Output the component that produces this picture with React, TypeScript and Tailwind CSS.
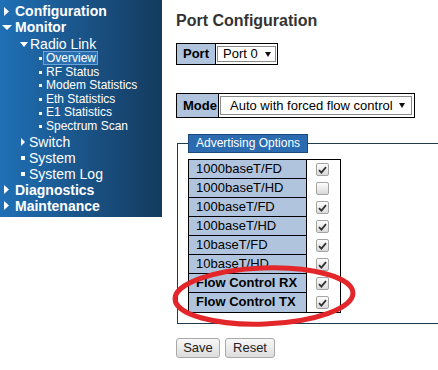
import React from 'react';

function TriRight({ w = 5, h = 9 }: { w?: number; h?: number }) {
  return (
    <svg width={w} height={h} viewBox={`0 0 ${w} ${h}`} className="shrink-0">
      <polygon points={`0,0 ${w},${h / 2} 0,${h}`} fill="white" />
    </svg>
  );
}

function TriDown({ w = 10, h = 5 }: { w?: number; h?: number }) {
  return (
    <svg width={w} height={h} viewBox={`0 0 ${w} ${h}`} className="shrink-0">
      <polygon points={`0,0 ${w},0 ${w / 2},${h}`} fill="white" />
    </svg>
  );
}

const subItems = ['Overview', 'RF Status', 'Modem Statistics', 'Eth Statistics', 'E1 Statistics', 'Spectrum Scan'];

function Sidebar() {
  return (
    <nav className="w-[162px] h-[217px] shrink-0 bg-gradient-to-r from-[#1f70b6] to-[#143a5e] pt-[3px] text-white">
      <div className="flex items-center h-[16px] pl-[4px] gap-[6px] text-[14px] font-bold leading-[16px]">
        <TriRight />
        <span>Configuration</span>
      </div>
      <div className="flex items-center h-[16px] pl-[2px] gap-[3px] text-[14px] font-bold leading-[16px]">
        <TriDown />
        <span>Monitor</span>
      </div>
      <div className="flex items-center h-[16px] mt-[1px] pl-[20px] gap-[2px] text-[14px] leading-[16px]">
        <TriDown w={8} h={5} />
        <span>Radio Link</span>
      </div>
      {subItems.map((item, i) => (
        <div key={item} className="flex items-center h-[13.6px] pl-[39px] gap-[4px] text-[12px] leading-[13.6px]">
          <span className="w-[3px] h-[3px] bg-white shrink-0" />
          {i === 0 ? (
            <span className="border border-[#6aa4dc] bg-[#2a70b0] pl-[2px] pr-[1px] ml-[-3px] leading-[12px] -mt-[2px]">{item}</span>
          ) : (
            <span>{item}</span>
          )}
        </div>
      ))}
      <div className="flex items-center h-[16px] pl-[21px] gap-[4px] text-[14px] leading-[16px]">
        <TriRight w={4} h={8} />
        <span>Switch</span>
      </div>
      <div className="flex items-center h-[16px] pl-[21px] gap-[4px] text-[14px] leading-[16px]">
        <span className="w-[4px] h-[4px] bg-white shrink-0" />
        <span>System</span>
      </div>
      <div className="flex items-center h-[16px] pl-[21px] gap-[4px] text-[14px] leading-[16px]">
        <span className="w-[4px] h-[4px] bg-white shrink-0" />
        <span>System Log</span>
      </div>
      <div className="flex items-center h-[16px] pl-[4px] gap-[6px] text-[14px] font-bold leading-[16px]">
        <TriRight />
        <span>Diagnostics</span>
      </div>
      <div className="flex items-center h-[16px] pl-[4px] gap-[6px] text-[14px] font-bold leading-[16px]">
        <TriRight />
        <span>Maintenance</span>
      </div>
    </nav>
  );
}

function SelectArrow() {
  return (
    <svg width="6" height="5" viewBox="0 0 6 5" className="shrink-0">
      <polygon points="0,0 6,0 3,5" fill="#111" />
    </svg>
  );
}

function CheckBox({ checked }: { checked: boolean }) {
  return (
    <span className="w-[13px] h-[13px] rounded-[2px] border border-[#a3a3a3] bg-gradient-to-b from-[#fdfdfd] to-[#dadada] flex items-center justify-center">
      {checked && (
        <svg width="9" height="8" viewBox="0 0 9 8">
          <path d="M1 4.2 L3.4 6.6 L8 1.2" stroke="#333" strokeWidth="1.8" fill="none" />
        </svg>
      )}
    </span>
  );
}

const options = [
  { label: '1000baseT/FD', checked: true },
  { label: '1000baseT/HD', checked: false },
  { label: '100baseT/FD', checked: true },
  { label: '100baseT/HD', checked: true },
  { label: '10baseT/FD', checked: true },
  { label: '10baseT/HD', checked: true },
  { label: 'Flow Control RX', checked: true, bold: true },
  { label: 'Flow Control TX', checked: true, bold: true },
];

export default function App() {
  return (
    <div className="relative w-[438px] h-[370px] overflow-hidden bg-white flex items-start font-['Liberation_Sans',Arial,sans-serif] text-black">
      <Sidebar />

      <main className="flex-1 pl-[14px] pt-[12px]">
        <h1 className="text-[16px] font-bold leading-[18px] text-[#333]">Port Configuration</h1>

        <div className="mt-[13px] flex w-[102px] h-[22px] border border-black">
          <div className="w-[39px] bg-[#b0c4de] border-r border-black pl-[6px] text-[13px] font-bold leading-[20px]">Port</div>
          <div className="pl-[1px] py-[2px]">
            <div className="w-[59px] h-[16px] border border-[#8a8a8a] flex items-center pl-[5px] gap-[7px] text-[13px] leading-[14px]">
              <span>Port 0</span>
              <SelectArrow />
            </div>
          </div>
        </div>

        <div className="mt-[28px] flex w-[239px] h-[25px] border border-black">
          <div className="w-[42px] bg-[#b0c4de] border-r border-black pl-[6px] text-[13px] font-bold leading-[23px]">Mode</div>
          <div className="pl-[1px] py-[2px]">
            <div className="w-[192px] h-[19px] border border-[#8a8a8a] flex items-center pl-[9px] gap-[6px] text-[13px] leading-[17px]">
              <span>Auto with forced flow control</span>
              <SelectArrow />
            </div>
          </div>
        </div>

        <fieldset className="mt-[16px] ml-[1px] w-[280px] border border-[#1f3b4d] pl-[10px] pt-[6px] pb-[10px]">
          <legend className="bg-[#2b6cb0] border border-[#1b4a7c] px-[7px] text-white text-[12px] leading-[17px]">
            Advertising Options
          </legend>
          <div className="w-[153px] border border-black flex flex-col">
            {options.map((o, i) => (
              <div key={o.label} className="flex h-[19px]">
                <div
                  className={`w-[118px] bg-[#b0c4de] border-r border-black pl-[7px] text-[13px] leading-[18px] ${
                    i < options.length - 1 ? 'border-b' : ''
                  } ${o.bold ? 'font-bold' : ''}`}
                >
                  {o.label}
                </div>
                <div className="flex-1 flex items-center justify-center pr-[3px]">
                  <CheckBox checked={o.checked} />
                </div>
              </div>
            ))}
          </div>
        </fieldset>

        <div className="mt-[14px] flex gap-[5px]">
          <button className="w-[44px] h-[20px] border border-[#a9a9a9] rounded-[3px] bg-gradient-to-b from-[#f8f8f8] to-[#dcdcdc] text-[13px] leading-[18px] text-[#222]">
            Save
          </button>
          <button className="w-[50px] h-[20px] border border-[#a9a9a9] rounded-[3px] bg-gradient-to-b from-[#f8f8f8] to-[#dcdcdc] text-[13px] leading-[18px] text-[#222]">
            Reset
          </button>
        </div>
      </main>

      {/* red marker ellipse drawn over the flow control rows */}
      <svg className="absolute left-[168px] top-[262px] pointer-events-none" width="195" height="70" viewBox="0 0 195 70">
        <ellipse cx="96" cy="34" rx="89" ry="28" transform="rotate(-2 96 34)" fill="none" stroke="#e3262a" strokeWidth="5" />
      </svg>
    </div>
  );
}
